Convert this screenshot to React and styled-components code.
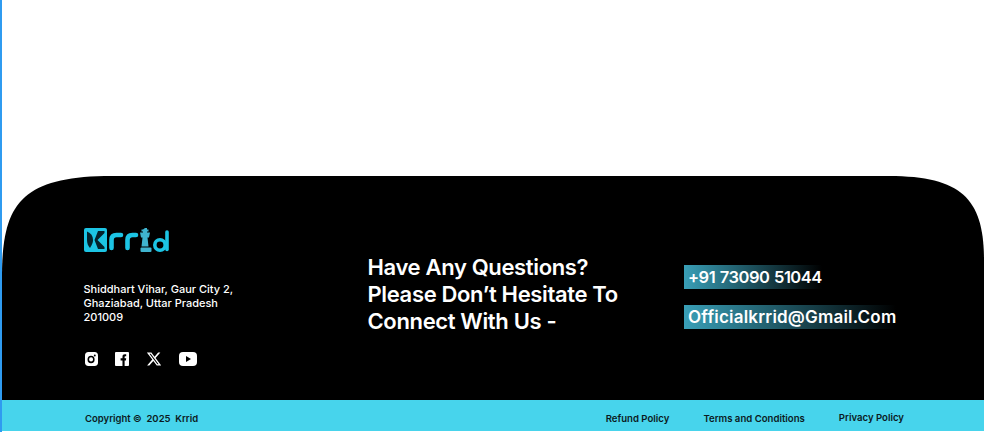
import React from "react";
import styled, { createGlobalStyle } from "styled-components";
import { FaXTwitter } from "react-icons/fa6";

const GlobalStyle = createGlobalStyle`
  html, body {
    margin: 0;
    padding: 0;
    background: #fff;
    font-family: "Inter", "Liberation Sans", sans-serif;
  }
`;

const Page = styled.div`
  width: 984px;
  height: 432px;
  box-sizing: border-box;
  border-left: 2px solid #2f9bf0;
  padding-top: 176px;
  overflow: hidden;
`;

const Footer = styled.footer`
  height: 224px;
  box-sizing: border-box;
  background: #000;
  clip-path: path("M0 224 V100 C0 28 19 0 110 0 H887 C962 0 982 25 982 85 V224 Z");
  padding: 52px 0 0 82px;
  display: grid;
  grid-template-columns: 284px 316px 1fr;
`;

const Brand = styled.div`
  display: flex;
  flex-direction: column;
`;

const Address = styled.p`
  margin: 29px 0 0 -0.5px;
  width: 170px;
  color: #fff;
  font-size: 11px;
  font-weight: 500;
  line-height: 14px;
`;

const Socials = styled.div`
  margin: 27px 0 0 1px;
  display: flex;
  align-items: center;
  gap: 17px;
  color: #fff;
`;

const Heading = styled.h2`
  margin: 26px 0 0 -0.5px;
  color: #fff;
  font-size: 22px;
  font-weight: 600;
  line-height: 27px;
  letter-spacing: -0.35px;
`;

const Contacts = styled.div`
  padding-top: 37px;
  display: flex;
  flex-direction: column;
  align-items: flex-start;
  gap: 16px;
`;

const Contact = styled.a`
  height: 24px;
  padding-left: 4px;
  display: flex;
  align-items: center;
  color: #fff;
  font-size: ${(props) => props.$size}px;
  font-weight: 600;
  letter-spacing: ${(props) => props.$spacing}px;
  word-spacing: 1px;
  background: linear-gradient(90deg, #399fb7 0%, #000 100%);
`;

const BottomBar = styled.div`
  height: 31px;
  box-sizing: border-box;
  background: #47d4ec;
  padding: 5px 0 0 83px;
  display: flex;
  align-items: center;
  justify-content: space-between;
  color: #0b1a22;
  font-size: 9.5px;
  font-weight: 600;
`;

const Copyright = styled.span`
  white-space: pre;
`;

const Links = styled.nav`
  display: flex;
  align-items: center;
  gap: 34px;
  padding-right: 80px;
  font-size: 9.6px;
`;

const PolicyLink = styled.a`
  color: #0b1a22;
  margin-bottom: ${(props) => (props.$raised ? "1px" : "0")};
`;

const Logo = () => (
  <svg width="87" height="25" viewBox="0 0 87 25" fill="none">
    <rect x="0" y="0" width="23" height="24" rx="2" fill="#1cc4e4" />
    <path d="M3 3.5 C7 5 9 8 9 12 C9 14.5 8 17 6 20 C4 18 3 15 3 12 Z" fill="#04222c" />
    <path d="M10.5 12 L14 3 H20.5 V5 L13.5 12 L20.5 19 V21 H14 Z" fill="#04222c" />
    <path d="M27.5 20 V12 C27.5 8.5 29.5 7 32.5 7 H37" stroke="#1cc4e4" strokeWidth="4.6" strokeLinecap="round" />
    <path d="M43.5 20 V12 C43.5 8.5 45.5 7 48.5 7 H52" stroke="#1cc4e4" strokeWidth="4.6" strokeLinecap="round" />
    <path d="M61 0 h2 v1.5 h1.5 v2 h-1.5 v1 h3 l-1 5 h-1.5 l1 9 h-7 l1 -9 h-1.5 l-1 -5 h3 v-1 h-1.5 v-2 h1.5 Z" fill="#3fb4cf" />
    <rect x="56.5" y="19.5" width="11" height="4.5" rx="1" fill="#3fb4cf" />
    <circle cx="76" cy="17" r="5.2" stroke="#1cc4e4" strokeWidth="3.6" />
    <path d="M83 4 V21.5" stroke="#1cc4e4" strokeWidth="3.6" strokeLinecap="round" />
  </svg>
);

const Instagram = () => (
  <svg width="13" height="14" viewBox="0 0 15 15" preserveAspectRatio="none">
    <rect width="15" height="15" rx="4" fill="#fff" />
    <circle cx="7" cy="8" r="3.2" fill="none" stroke="#000" strokeWidth="1.8" />
    <circle cx="11.3" cy="3.7" r="1.1" fill="#000" />
  </svg>
);

const Facebook = () => (
  <svg width="14" height="14" viewBox="0 0 15 15">
    <rect width="15" height="15" rx="1" fill="#fff" />
    <path d="M8 15 V9 H6 V6.6 H8 V5 C8 3.2 9 2.4 10.6 2.4 H12 V4.6 H11 C10.4 4.6 10.3 4.9 10.3 5.4 V6.6 H12 L11.7 9 H10.3 V15 Z" fill="#000" />
  </svg>
);

const Youtube = () => (
  <svg width="18" height="14" viewBox="0 0 18 14">
    <rect width="18" height="14" rx="4" fill="#fff" />
    <path d="M7 4 L12 7 L7 10 Z" fill="#000" />
  </svg>
);

const App = () => {
  return (
    <Page>
      <GlobalStyle />
      <Footer>
        <Brand>
          <Logo />
          <Address>Shiddhart Vihar, Gaur City 2, Ghaziabad, Uttar Pradesh 201009</Address>
          <Socials>
            <Instagram />
            <Facebook />
            <FaXTwitter size={16} />
            <Youtube />
          </Socials>
        </Brand>
        <Heading>
          Have Any Questions?
          <br />
          Please Don’t Hesitate To
          <br />
          Connect With Us -
        </Heading>
        <Contacts>
          <Contact $size={16.5} $spacing={-0.5}>+91 73090 51044</Contact>
          <Contact $size={17} $spacing={0.2}>Officialkrrid@Gmail.Com</Contact>
        </Contacts>
      </Footer>
      <BottomBar>
        <Copyright>Copyright ©  2025  Krrid</Copyright>
        <Links>
          <PolicyLink>Refund Policy</PolicyLink>
          <PolicyLink>Terms and Conditions</PolicyLink>
          <PolicyLink $raised>Privacy Policy</PolicyLink>
        </Links>
      </BottomBar>
    </Page>
  );
};

export default App;
